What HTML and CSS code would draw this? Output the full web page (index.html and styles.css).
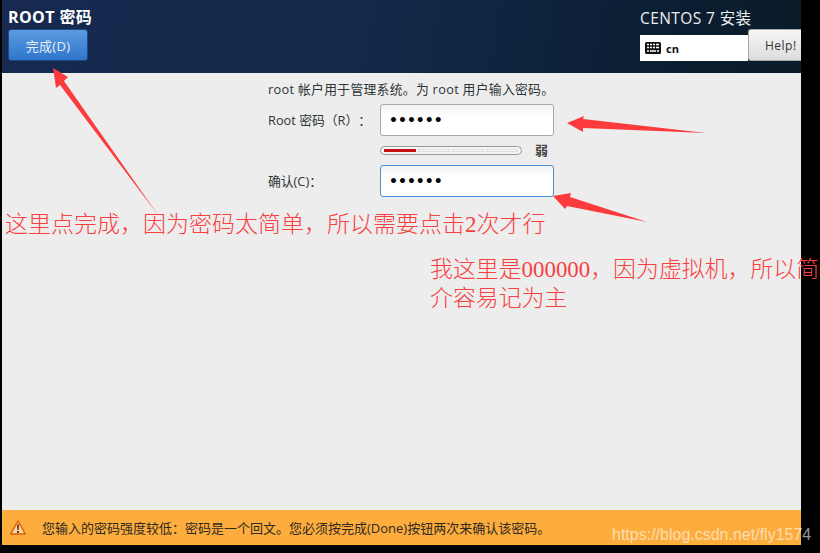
FILE: index.html
```html
<!DOCTYPE html>
<html lang="zh-CN">
<head>
  <meta charset="UTF-8"/>
  <title>ROOT 密码</title>
  <link rel="stylesheet" href="styles.css">
</head>
<body>
  <div class="screen">
    <header class="topbar">
      <div class="topbar-left">
        <h1 class="spoke-title">ROOT 密码</h1>
        <button class="done-btn">完成(D)</button>
      </div>
      <div class="topbar-right">
        <div class="product-title">CENTOS 7 安装</div>
        <div class="layout-row">
          <div class="layout-box">
            <svg class="kbd-icon" width="16" height="12" viewBox="0 0 16 12">
              <rect width="16" height="12" rx="1.5" fill="#111"/>
              <path d="M2 2.5h2M5 2.5h2M8 2.500h2M11 2.500h3M2 5.500h2M5 5.500h2M8 5.500h2M11 5.500h3M2 9h2M5 9h6M12 9h2" stroke="#fff" stroke-width="1.400"/>
            </svg>
            <span>cn</span>
          </div>
          <button class="help-btn">Help!</button>
        </div>
      </div>
    </header>

    <main class="content">
      <p class="intro">root 帐户用于管理系统。为 root 用户输入密码。</p>
      <div class="form-row">
        <label>Root 密码（R）：</label>
        <div class="pw-input">••••••</div>
      </div>
      <div class="strength-row">
        <div class="meter">
          <span class="seg seg-on"></span>
          <span class="seg"></span>
          <span class="seg"></span>
          <span class="seg"></span>
        </div>
        <span class="strength-text">弱</span>
      </div>
      <div class="form-row">
        <label>确认(C)：</label>
        <div class="pw-input pw-focus">••••••</div>
      </div>
    </main>

    <footer class="warnbar">
      <svg width="16" height="15" viewBox="0 0 16 15">
        <path d="M8 1 15.300 14H.7z" fill="#f4d9a0" stroke="#d9620f" stroke-width="1.500" stroke-linejoin="round"/>
        <path d="M7 4.500h2l-.3 5.500h-1.400zM7 11h2v2h-2z" fill="#7a2e05"/>
      </svg>
      <span>您输入的密码强度较低：密码是一个回文。您必须按完成(Done)按钮两次来确认该密码。</span>
    </footer>
  </div>

  <!-- red notes drawn over the screenshot -->
  <svg class="arrows" width="820" height="553" viewBox="0 0 820 553">
    <polygon points="53,68 68,77 64,81 158,215 60,85 56,88" fill="#fc3c3c"/>
    <polygon points="567,123 584,116 583,119 706,133 583,128 583,132" fill="#fc3c3c"/>
    <polygon points="553,196 571,193 570,197 647,222 567,206 565,209" fill="#fc3c3c"/>
  </svg>
  <div class="note note-done">这里点完成，因为密码太简单，所以需要点击2次才行</div>
  <div class="note note-pw">我这里是000000，因为虚拟机，所以简<br>介容易记为主</div>
  <div class="watermark">https://blog.csdn.net/fly1574</div>
</body>
</html>
```

FILE: styles.css
```css
* {
  box-sizing: border-box;
}

html, body {
  margin: 0;
  height: 553px;
  overflow: hidden;
  background: #000;
}

body {
  font-family: "Open Sans", "Noto Sans CJK JP", sans-serif;
  color: #2e3436;
  text-spacing-trim: space-all;
}

.screen {
  width: 799px;
  height: 545px;
  margin-left: 2px;
  display: flex;
  flex-direction: column;
  background: #ededed;
}

.topbar {
  height: 73px;
  display: flex;
  justify-content: space-between;
  background: linear-gradient(100deg, #17294f 0%, #13294a 45%, #0c2137 75%, #0a1a28 100%);
}

.topbar-left {
  padding: 8px 0 0 6px;
}

.spoke-title {
  margin: 0 0 3px;
  font-size: 16px;
  line-height: 18px;
  font-weight: 700;
  letter-spacing: 0.4px;
  color: #fff;
}

.done-btn {
  display: block;
  width: 80px;
  height: 32px;
  padding: 0;
  border: 1px solid #1d4a7f;
  border-radius: 3px;
  background: linear-gradient(#5b9ae0, #2e76cc);
  color: #e8eef6;
  font-family: inherit;
  font-size: 13px;
  letter-spacing: 0.3px;
}

.topbar-right {
  width: 161px;
  padding-top: 8px;
}

.product-title {
  font-size: 15.500px;
  line-height: 20px;
  color: #eee;
  letter-spacing: 0.4px;
}

.layout-row {
  display: flex;
  align-items: flex-start;
  margin-top: 1px;
}

.layout-box {
  width: 108px;
  height: 26px;
  margin-top: 6px;
  padding-left: 5px;
  display: flex;
  align-items: center;
  gap: 5px;
  background: #fff;
  color: #111;
  font-size: 11px;
  font-weight: 700;
}

.help-btn {
  width: 53px;
  height: 32px;
  padding: 0 0 0 16px;
  border: 1px solid #a8a8a8;
  border-right: 0;
  border-radius: 3px 0 0 3px;
  background: linear-gradient(#f6f6f6, #dcdcdc);
  color: #333;
  font-family: inherit;
  font-size: 12px;
  letter-spacing: 0.5px;
  text-align: left;
  white-space: nowrap;
}

.content {
  flex: 1;
  padding: 8px 0 0 266px;
}

.intro {
  margin: 0 0 7px;
  font-size: 12.800px;
  line-height: 16px;
  letter-spacing: 0.3px;
}

.form-row {
  display: flex;
  align-items: center;
  height: 32px;
}

.form-row label {
  width: 112px;
  margin-bottom: 2px;
  font-size: 12.800px;
  white-space: nowrap;
}

.pw-input {
  width: 174px;
  height: 32px;
  padding-left: 8px;
  border: 1px solid #a8a8a8;
  border-radius: 3px;
  background: linear-gradient(#f2f2f2, #fff 40%);
  color: #000;
  font-family: "DejaVu Sans", sans-serif;
  font-size: 14px;
  font-weight: 700;
  line-height: 30px;
  letter-spacing: 0;
}

.pw-focus {
  border-color: #4a90d9;
}

.strength-row {
  display: flex;
  align-items: center;
  height: 29px;
  margin-left: 112px;
}

.meter {
  width: 142px;
  height: 9px;
  padding: 2px 3px;
  display: flex;
  gap: 2px;
  border: 1px solid #999;
  border-radius: 5px;
  background: #f4f4f4;
}

.seg {
  flex: 1;
  background: #fafafa;
  border: 1px solid #ddd;
}

.seg-on {
  background: #c41212;
  border-color: #c41212;
}

.strength-text {
  margin: 0 0 3px 13px;
  font-size: 13px;
  font-weight: 700;
  color: #444;
}

.warnbar {
  height: 35px;
  display: flex;
  align-items: center;
  gap: 16px;
  padding-left: 8px;
  background: #fdac3e;
  color: #2e2a20;
  font-size: 13px;
}

.arrows {
  position: absolute;
  top: 0;
  left: 0;
}

.note {
  position: absolute;
  color: #f84040;
  font-family: "Liberation Serif", "Noto Sans CJK SC", sans-serif;
  font-size: 23px;
  font-weight: 300;
  line-height: 29px;
  white-space: nowrap;
}

.note-done {
  top: 210px;
  left: 5px;
}

.note-pw {
  top: 255px;
  left: 430px;
  font-size: 22.900px;
}

.watermark {
  position: absolute;
  top: 526px;
  left: 612px;
  font-family: "Liberation Sans", sans-serif;
  font-size: 16px;
  color: rgba(255, 255, 255, 0.6);
}
```
